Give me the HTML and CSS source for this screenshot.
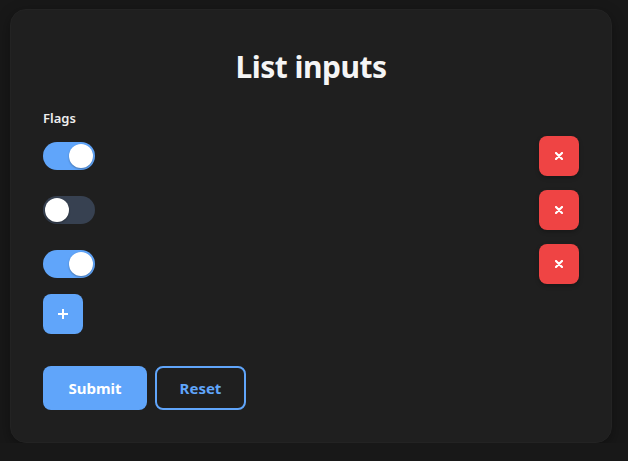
FILE: index.html
```html
<!DOCTYPE html>
<html lang="en">
<head>
<meta charset="utf-8">
<title>List inputs</title>
<link rel="stylesheet" href="styles.css">
</head>
<body>
<main class="card">
  <h1 class="title">List inputs</h1>
  <div class="field">
    <div class="label">Flags</div>
    <div class="list">
      <div class="row">
        <span class="toggle on"><span class="knob"></span></span>
        <button class="btn-del" type="button" aria-label="Remove"><svg width="8" height="8" viewBox="0 0 8 8"><path d="M1 1L7 7M7 1L1 7" stroke="#fff" stroke-width="2.2" stroke-linecap="round"/></svg></button>
      </div>
      <div class="row">
        <span class="toggle"><span class="knob"></span></span>
        <button class="btn-del" type="button" aria-label="Remove"><svg width="8" height="8" viewBox="0 0 8 8"><path d="M1 1L7 7M7 1L1 7" stroke="#fff" stroke-width="2.2" stroke-linecap="round"/></svg></button>
      </div>
      <div class="row">
        <span class="toggle on"><span class="knob"></span></span>
        <button class="btn-del" type="button" aria-label="Remove"><svg width="8" height="8" viewBox="0 0 8 8"><path d="M1 1L7 7M7 1L1 7" stroke="#fff" stroke-width="2.2" stroke-linecap="round"/></svg></button>
      </div>
    </div>
    <button class="btn-add" type="button" aria-label="Add"><svg width="10" height="10" viewBox="0 0 10 10"><path d="M5 0.5V9.5M0.5 5H9.5" stroke="#fff" stroke-width="2" stroke-linecap="round"/></svg></button>
  </div>
  <div class="actions">
    <button class="btn-submit" type="button">Submit</button>
    <button class="btn-reset" type="button">Reset</button>
  </div>
</main>
</body>
</html>
```

FILE: styles.css
```css
html, body {
  margin: 0;
  background: #181818;
}
body {
  padding: 9px 16px 0 10px;
  font-family: "Noto Sans", "Open Sans", sans-serif;
  color: #f3f3f3;
}
.card {
  background: #1f1f1f;
  border: 1px solid #232323;
  border-radius: 16px;
  box-shadow: 0 4px 14px rgba(0, 0, 0, 0.35);
  padding: 32px;
  height: 434px;
  box-sizing: border-box;
}
.title {
  margin: 0 0 16px;
  text-align: center;
  font-size: 30px;
  line-height: 50px;
  font-weight: 700;
  color: #f5f5f5;
  letter-spacing: -0.5px;
}
.label {
  font-size: 13px;
  font-weight: 600;
  line-height: 20px;
  margin-bottom: 8px;
  color: #eeeeee;
}
.list {
  display: flex;
  flex-direction: column;
  gap: 14px;
}
.row {
  display: flex;
  align-items: center;
  justify-content: space-between;
  height: 40px;
}
.toggle {
  position: relative;
  width: 52px;
  height: 28px;
  border-radius: 14px;
  background: #374151;
  box-sizing: border-box;
}
.toggle.on {
  background: #60a5fa;
}
.knob {
  position: absolute;
  top: 2px;
  left: 2px;
  width: 24px;
  height: 24px;
  border-radius: 50%;
  background: #ffffff;
  box-shadow: 0 1px 2px rgba(0, 0, 0, 0.3);
}
.toggle.on .knob {
  left: 26px;
}
button {
  font-family: inherit;
  cursor: pointer;
}
.btn-del {
  width: 40px;
  height: 40px;
  border: 0;
  border-radius: 8px;
  background: #ef4444;
  display: flex;
  align-items: center;
  justify-content: center;
  padding: 0;
  box-shadow: 0 2px 4px rgba(0, 0, 0, 0.25);
}
.btn-add {
  margin-top: 10px;
  width: 40px;
  height: 40px;
  border: 0;
  border-radius: 8px;
  background: #60a5fa;
  display: flex;
  align-items: center;
  justify-content: center;
  padding: 0;
}
.actions {
  display: flex;
  gap: 8px;
  margin-top: 32px;
}
.btn-submit, .btn-reset {
  height: 44px;
  border-radius: 8px;
  font-size: 15px;
  font-weight: 700;
  box-sizing: border-box;
}
.btn-submit {
  width: 104px;
  border: 0;
  background: #60a5fa;
  color: #ffffff;
}
.btn-reset {
  width: 91px;
  border: 2px solid #60a5fa;
  background: transparent;
  color: #60a5fa;
}
```
